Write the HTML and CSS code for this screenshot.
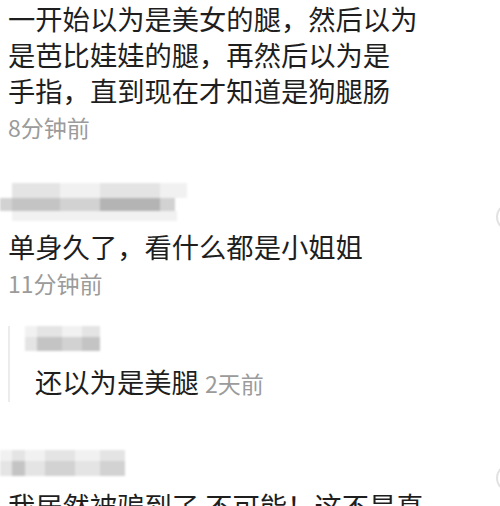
FILE: index.html
```html
<!DOCTYPE html>
<html lang="zh-CN">
<head>
    <meta charset="UTF-8">
    <meta name="viewport" content="width=device-width, initial-scale=1.0">
    <title>评论</title>
    <link rel="stylesheet" href="styles.css">
</head>
<body>
    <div class="list">
        <div class="comment first">
            <p class="text">一开始以为是美女的腿，然后以为<br>是芭比娃娃的腿，再然后以为是<br>手指，直到现在才知道是狗腿肠</p>
            <p class="time">8分钟前</p>
        </div>

        <div class="comment">
            <div class="name name-a">
                <div class="row r-top"><span class="c l2 w48"></span><span class="c l1 w40"></span><span class="c l2 w60"></span><span class="c l1 w27"></span></div>
                <div class="row r-mid"><span class="c l3 w12"></span><span class="c l4 w48"></span><span class="c l3 w40"></span><span class="c l5 w60"></span><span class="c l3 w15"></span></div>
                <div class="row r-bot"><span class="c l1 w175"></span></div>
            </div>
            <p class="text">单身久了，看什么都是小姐姐</p>
            <p class="time">11分钟前</p>
            <span class="edge edge-a"></span>
        </div>

        <div class="reply">
            <div class="name name-b">
                <div class="row r-top2"><span class="c l1 w12"></span><span class="c l2 w25"></span><span class="c l1 w20"></span><span class="c l2 w18"></span></div>
                <div class="row r-bot2"><span class="c l2 w12"></span><span class="c l4 w25"></span><span class="c l3 w20"></span><span class="c l4 w18"></span></div>
            </div>
            <p class="reply-text">还以为是美腿 <span class="reply-time">2天前</span></p>
        </div>

        <div class="comment last">
            <div class="name name-c">
                <div class="row r-top3"><span class="c l1 w12"></span><span class="c l2 w13"></span><span class="c l1 w20"></span><span class="c l2 w30"></span><span class="c l1 w25"></span><span class="c l2 w25"></span></div>
                <div class="row r-bot3"><span class="c l2 w12"></span><span class="c l4 w13"></span><span class="c l2 w20"></span><span class="c l3 w30"></span><span class="c l2 w25"></span><span class="c l3 w25"></span></div>
            </div>
            <p class="text">我居然被骗到了 不可能！这不是真</p>
            <span class="edge edge-c"></span>
        </div>
    </div>
</body>
</html>
```

FILE: styles.css
```css
body {
    margin: 0;
    padding: 0;
    background: #ffffff;
    font-family: "Noto Sans CJK SC", "Noto Sans", sans-serif;
    color: #1e1e1e;
    overflow: hidden;
}
p {
    margin: 0;
}
.list {
    padding-left: 8px;
}
.comment {
    position: relative;
}
.text {
    font-size: 27.3px;
    line-height: 36px;
    white-space: nowrap;
}
.time {
    font-size: 23px;
    line-height: 28px;
    margin-top: 5px;
    color: #9b9b9b;
}

/* mosaic user names */
.name {
    display: flex;
    flex-direction: column;
    filter: blur(1px);
}
.row {
    display: flex;
}
.c {
    display: block;
    height: 100%;
}
.l1 { background: #f1f1f1; }
.l2 { background: #e4e4e4; }
.l3 { background: #d2d2d2; }
.l4 { background: #c4c4c4; }
.l5 { background: #b4b4b4; }
.w12 { width: 12px; }
.w13 { width: 13px; }
.w15 { width: 15px; }
.w18 { width: 18px; }
.w20 { width: 20px; }
.w25 { width: 25px; }
.w27 { width: 27px; }
.w30 { width: 30px; }
.w40 { width: 40px; }
.w48 { width: 48px; }
.w60 { width: 60px; }
.w175 { width: 165px; }

.name-a {
    margin: 42px 0 0 -8px;
    height: 38px;
}
.name-a .r-top { height: 15px; margin-left: 12px; }
.name-a .r-mid { height: 13px; }
.name-a .r-bot { height: 10px; margin-left: 12px; }
.name-a + .text {
    margin-top: 7px;
}

.reply {
    margin-top: 29px;
    border-left: 2px solid #ececec;
    padding: 0 0 1px 15px;
}
.name-b {
    height: 25px;
}
.name-b .r-top2 { height: 11px; }
.name-b .r-bot2 { height: 14px; }
.reply-text {
    margin-top: 12px;
    margin-left: 10px;
    font-size: 27.3px;
    line-height: 36px;
}
.reply-time {
    font-size: 23px;
    color: #9b9b9b;
}

.name-c {
    margin: 48px 0 0 -8px;
    height: 26px;
}
.name-c .r-top3 { height: 11px; }
.name-c .r-bot3 { height: 15px; }
.name-c + .text {
    margin-top: 11px;
}

/* cut-off button on the right edge */
.edge {
    position: absolute;
    left: 488px;
    width: 24px;
    height: 24px;
    border-radius: 50%;
    border: 2px solid #e2e2e2;
}
.edge-a {
    top: 20px;
}
.edge-c {
    top: 14px;
}
```
